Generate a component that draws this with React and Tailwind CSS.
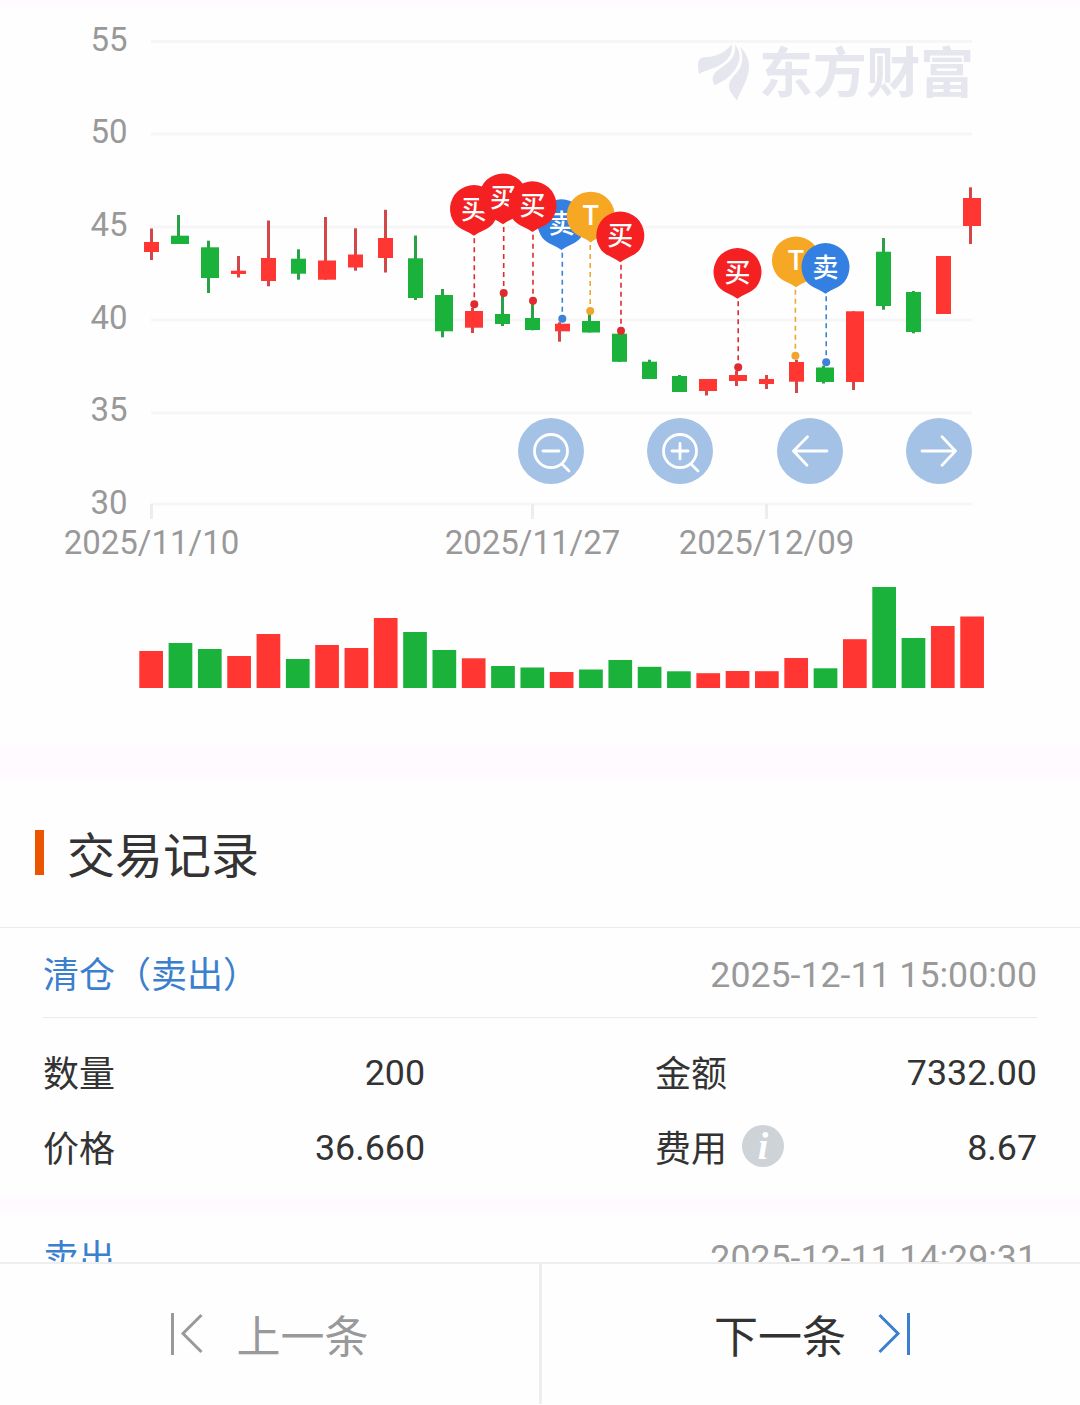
const UP = "#ff3632";
const DOWN = "#1ab23a";

const GRID = [
  { label: "55", y: 41.5, textY: 51 },
  { label: "50", y: 134, textY: 143 },
  { label: "45", y: 227, textY: 236 },
  { label: "40", y: 320, textY: 329 },
  { label: "35", y: 413, textY: 421 },
  { label: "30", y: 504, textY: 514 },
];

const DATES = [
  { label: "2025/11/10", x: 151.5 },
  { label: "2025/11/27", x: 532.5 },
  { label: "2025/12/09", x: 766.5 },
];

// [body x, body width, body top, body bottom, wick x, wick top, wick bottom, color]
const CANDLES = [
  [144, 15, 242, 252, 150, 228.5, 260, UP],
  [171, 18, 235.7, 244, 177, 215, 244, DOWN],
  [201, 18, 247.3, 278, 207, 240.7, 293, DOWN],
  [231, 15, 270.7, 274, 237, 256, 277.5, UP],
  [261, 15, 258, 281, 267, 220.5, 286.3, UP],
  [291, 15, 258.7, 273.7, 297, 249.3, 279.7, DOWN],
  [318, 18, 260.5, 279.7, 324, 217, 279.7, UP],
  [348, 15, 254.5, 267.5, 354, 228.3, 270.7, UP],
  [378, 15, 238, 258, 384, 209.8, 272.5, UP],
  [408, 15, 258.3, 298, 414, 235.5, 300, DOWN],
  [435, 18, 295, 331.3, 441, 289, 337.3, DOWN],
  [465, 18, 311, 327.7, 471, 308, 333, UP],
  [495, 15, 314, 324, 501, 296, 326, DOWN],
  [525, 15, 318, 330, 531, 304, 330.3, DOWN],
  [555, 15, 323.7, 331.3, 558, 322.3, 341.7, UP],
  [582, 18, 321, 332.5, 588, 314, 332.5, DOWN],
  [612, 15, 333.7, 361.8, 618, 333.7, 361.8, DOWN],
  [642, 15, 361.7, 379, 648, 359.7, 379, DOWN],
  [672, 15, 376, 392, 678, 375, 392, DOWN],
  [699, 18, 379, 391, 705, 379, 395.5, UP],
  [729, 18, 375, 381, 735, 371, 386, UP],
  [759, 15, 379, 384, 765, 375, 389, UP],
  [789, 15, 362, 381.7, 795, 359.7, 393, UP],
  [816, 18, 367.5, 382, 822, 365.7, 383.5, DOWN],
  [846, 18, 311.3, 382, 852, 311.3, 390, UP],
  [876, 15, 251.7, 306, 882, 238, 309.7, DOWN],
  [906, 15, 292, 332, 912, 291, 333.3, DOWN],
  [936, 15, 256, 314, 942, 256, 314, UP],
  [963, 18, 198, 226, 969, 187.3, 244, UP],
];

// [top, color]
const VOLUMES = [
  [651, UP], [643, DOWN], [649, DOWN], [656, UP], [634, UP], [659, DOWN],
  [645, UP], [648, UP], [618, UP], [632, DOWN], [650, DOWN], [658.3, UP],
  [666, DOWN], [667.5, DOWN], [672, UP], [669.5, DOWN], [660, DOWN],
  [666.8, DOWN], [671.3, DOWN], [673.2, UP], [671, UP], [671.2, UP],
  [658, UP], [668.3, DOWN], [639.2, UP], [587, DOWN], [638, DOWN],
  [626, UP], [616.5, UP],
];

const PIN_COLORS = { 买: "#f52022", 卖: "#3380e2", T: "#f6a724" };
const DOT_COLORS = { 买: "#e02a2e", 卖: "#3b82d8", T: "#efa62f" };

// drawn in order, later pins cover earlier ones
const PINS = [
  { type: "卖", x: 561.5, top: 199.3, dotX: 562.3, dotY: 318.7 },
  { type: "买", x: 474, top: 185, dotX: 474.3, dotY: 304.3 },
  { type: "买", x: 503, top: 173.5, dotX: 503.7, dotY: 293 },
  { type: "买", x: 532.5, top: 181.3, dotX: 533, dotY: 300.7 },
  { type: "T", x: 590.7, top: 191.7, dotX: 590.2, dotY: 311 },
  { type: "买", x: 620.3, top: 211.5, dotX: 621, dotY: 330.7 },
  { type: "买", x: 737.5, top: 248, dotX: 738.2, dotY: 367.3 },
  { type: "T", x: 796, top: 236.5, dotX: 795.4, dotY: 355.8 },
  { type: "卖", x: 825.5, top: 243, dotX: 826.2, dotY: 362.3 },
];

function Pin({ type, x, top, dotX, dotY }) {
  return (
    <g>
      <line x1={dotX} y1={dotY - 4} x2={dotX} y2={top + 50} stroke={DOT_COLORS[type]} strokeWidth="1.6" strokeDasharray="5 4" strokeDashoffset="-3" />
      <circle cx={dotX} cy={dotY} r="4" fill={DOT_COLORS[type]} />
      <path
        transform={`translate(${x} ${top + 24})`}
        d="M-19 14.660 A24 24 0 1 1 19 14.660 C14 20.500 6 22 0 26.800 C-6 22 -14 20.500 -19 14.660 Z"
        fill={PIN_COLORS[type]}
      />
      <text
        x={x}
        y={type === "T" ? top + 33 : top + 33.800}
        textAnchor="middle"
        fill="#fff"
        className={
          type === "T"
            ? "font-[Roboto,sans-serif] text-[27px] font-medium"
            : "font-['Noto_Sans_CJK_SC',sans-serif] text-[26px] font-medium"
        }
      >
        {type}
      </text>
    </g>
  );
}

function Watermark() {
  return (
    <g fill="#e6e6ef">
      <g transform="translate(680 20) scale(0.3333)">
        <path d="M155 73 C134 102 104 111 72 112 C58 113 54 124 54 140 L57 162 C74 152 98 148 119 136 C146 120 160 99 155 73 Z" />
        <path d="M165 74 C170 106 150 125 124 143 C106 154 97 166 98 180 L103 196 C122 187 142 178 158 158 C180 133 188 101 165 74 Z" />
        <path d="M180 80 C205 102 213 138 203 166 C196 194 180 214 171 242 C161 226 145 215 147 195 C150 171 176 159 184 134 C189 115 187 95 180 80 Z" />
      </g>
      <text x="759" y="93" textLength="215" className="font-['Noto_Sans_CJK_SC',sans-serif] text-[54px] font-bold">
        东方财富
      </text>
    </g>
  );
}

function Chart() {
  return (
    <svg width="1080" height="740" viewBox="0 7 1080 740" className="block">
      {GRID.map((g) => (
        <g key={g.label}>
          <line x1="151" x2="972" y1={g.y} y2={g.y} stroke="#f6f6f6" strokeWidth="3" />
          <text x="127.500" y={g.textY} textAnchor="end" fill="#999" className="font-[Roboto,sans-serif] text-[33px]">
            {g.label}
          </text>
        </g>
      ))}
      {DATES.map((d) => (
        <g key={d.label}>
          <line x1={d.x} x2={d.x} y1="504" y2="519" stroke="#ededed" strokeWidth="3" />
          <text x={d.x} y="554" textAnchor="middle" fill="#999" className="font-[Roboto,sans-serif] text-[33px]">
            {d.label}
          </text>
        </g>
      ))}
      <Watermark />
      {CANDLES.map(([x, w, top, bottom, wx, wTop, wBottom, color]) => (
        <g key={x}>
          <rect x={wx} y={wTop} width="3" height={wBottom - wTop} fill={color === UP ? "#d2474a" : "#2aa147"} />
          <rect x={x} y={top} width={w} height={bottom - top} fill={color} />
        </g>
      ))}
      {VOLUMES.map(([top, color], i) => (
        <rect key={i} x={139.3 + i * 29.32} y={top} width="23.700" height={688 - top} fill={color} />
      ))}
      {PINS.map((p) => (
        <Pin key={p.x} {...p} />
      ))}
    </svg>
  );
}

function RoundButton({ label, children }) {
  return (
    <button aria-label={label} className="size-[66px] rounded-full bg-[#a4c1e6]">
      <svg width="66" height="66" viewBox="0 0 66 66" fill="none" stroke="#fff" strokeWidth="2.800" strokeLinecap="round" strokeLinejoin="round">
        {children}
      </svg>
    </button>
  );
}

function Controls() {
  return (
    <div className="absolute top-[411px] left-[518px] flex w-[454px] justify-between">
      <RoundButton label="缩小">
        <circle cx="33" cy="33" r="16.500" />
        <path d="M25 33h16M44.500 46.500l6.500 6.500" />
      </RoundButton>
      <RoundButton label="放大">
        <circle cx="33" cy="33" r="16.500" />
        <path d="M25 33h16M33 25.500v15.500M44.500 46.500l6.500 6.500" />
      </RoundButton>
      <RoundButton label="左移">
        <path d="M50 33H16.500M30.500 18.800L16.500 33l13.500 14.200" />
      </RoundButton>
      <RoundButton label="右移">
        <path d="M16 33h33.500M36 18.800L49.500 33L36 47.200" />
      </RoundButton>
    </div>
  );
}

function Field({ label, value, info }) {
  return (
    <div className="flex h-[75px] items-center justify-between">
      <div className="flex items-center gap-[15px]">
        <span className="pt-0.5">{label}</span>
        {info && (
          <span className="mb-1.5 flex size-[42px] items-center justify-center rounded-full bg-[#ced3d7] font-['Liberation_Serif',serif] text-[38px] leading-none font-bold text-white italic">
            i
          </span>
        )}
      </div>
      <span className="text-[35.8px]">{value}</span>
    </div>
  );
}

function RecordHeader({ title, time }) {
  return (
    <div className="mx-[43px] flex h-[90px] items-center justify-between border-b border-[#ececec]">
      <span className="pt-[7px] text-[#3b7fcf]">{title}</span>
      <span className="pt-1.5 text-[35.7px] text-[#999]">{time}</span>
    </div>
  );
}

export default function App() {
  return (
    <div className="flex h-[1405px] w-[1080px] flex-col overflow-hidden bg-[#fefefe] font-[Roboto,'Noto_Sans_CJK_SC',sans-serif] text-[#333]">
      <main className="h-[1262px] overflow-hidden text-[36px] leading-none">
        <div className="h-[7px] bg-[#fefaff]" />
        <section className="relative">
          <Chart />
          <Controls />
        </section>
        <div className="h-[33px] bg-[#fefaff]" />

        <section>
          <div className="flex h-[148px] items-center border-b border-[#ececec] pl-[35px]">
            <span className="mb-0.5 h-[45px] w-[9px] bg-[#eb5500]" />
            <h2 className="ml-[23px] pt-[7px] text-[48px]">交易记录</h2>
          </div>

          <RecordHeader title="清仓（卖出）" time="2025-12-11 15:00:00" />
          <div className="grid h-[179px] grid-cols-[382px_382px] content-start justify-between px-[43px] pt-[18px]">
            <Field label="数量" value="200" />
            <Field label="金额" value="7332.00" />
            <Field label="价格" value="36.660" />
            <Field label="费用" value="8.67" info />
          </div>
          <div className="h-4 bg-[#fefaff]" />
          <div className="-mt-0.5">
            <RecordHeader title="卖出" time="2025-12-11 14:29:31" />
          </div>
        </section>
      </main>

      <footer className="flex h-[142px] border-t-2 border-[#eee] text-[44px] leading-none">
        <button className="flex w-[542px] items-center justify-center gap-[34px] border-r-3 border-[#eee] text-[#999]">
          <svg width="32" height="42" viewBox="0 0 32 42" fill="none" stroke="#999" strokeWidth="3">
            <path d="M1.500 0v42M30.500 2L12 20.500L30.500 39" />
          </svg>
          <span className="pt-[8px]">上一条</span>
        </button>
        <button className="flex flex-1 items-center justify-center gap-[32px] pl-0.5">
          <span className="pt-[8px]">下一条</span>
          <svg width="32" height="42" viewBox="0 0 32 42" fill="none" stroke="#3b7fcf" strokeWidth="3">
            <path d="M30.500 0v42M1.500 2L20 20.500L1.500 39" />
          </svg>
        </button>
      </footer>
    </div>
  );
}
